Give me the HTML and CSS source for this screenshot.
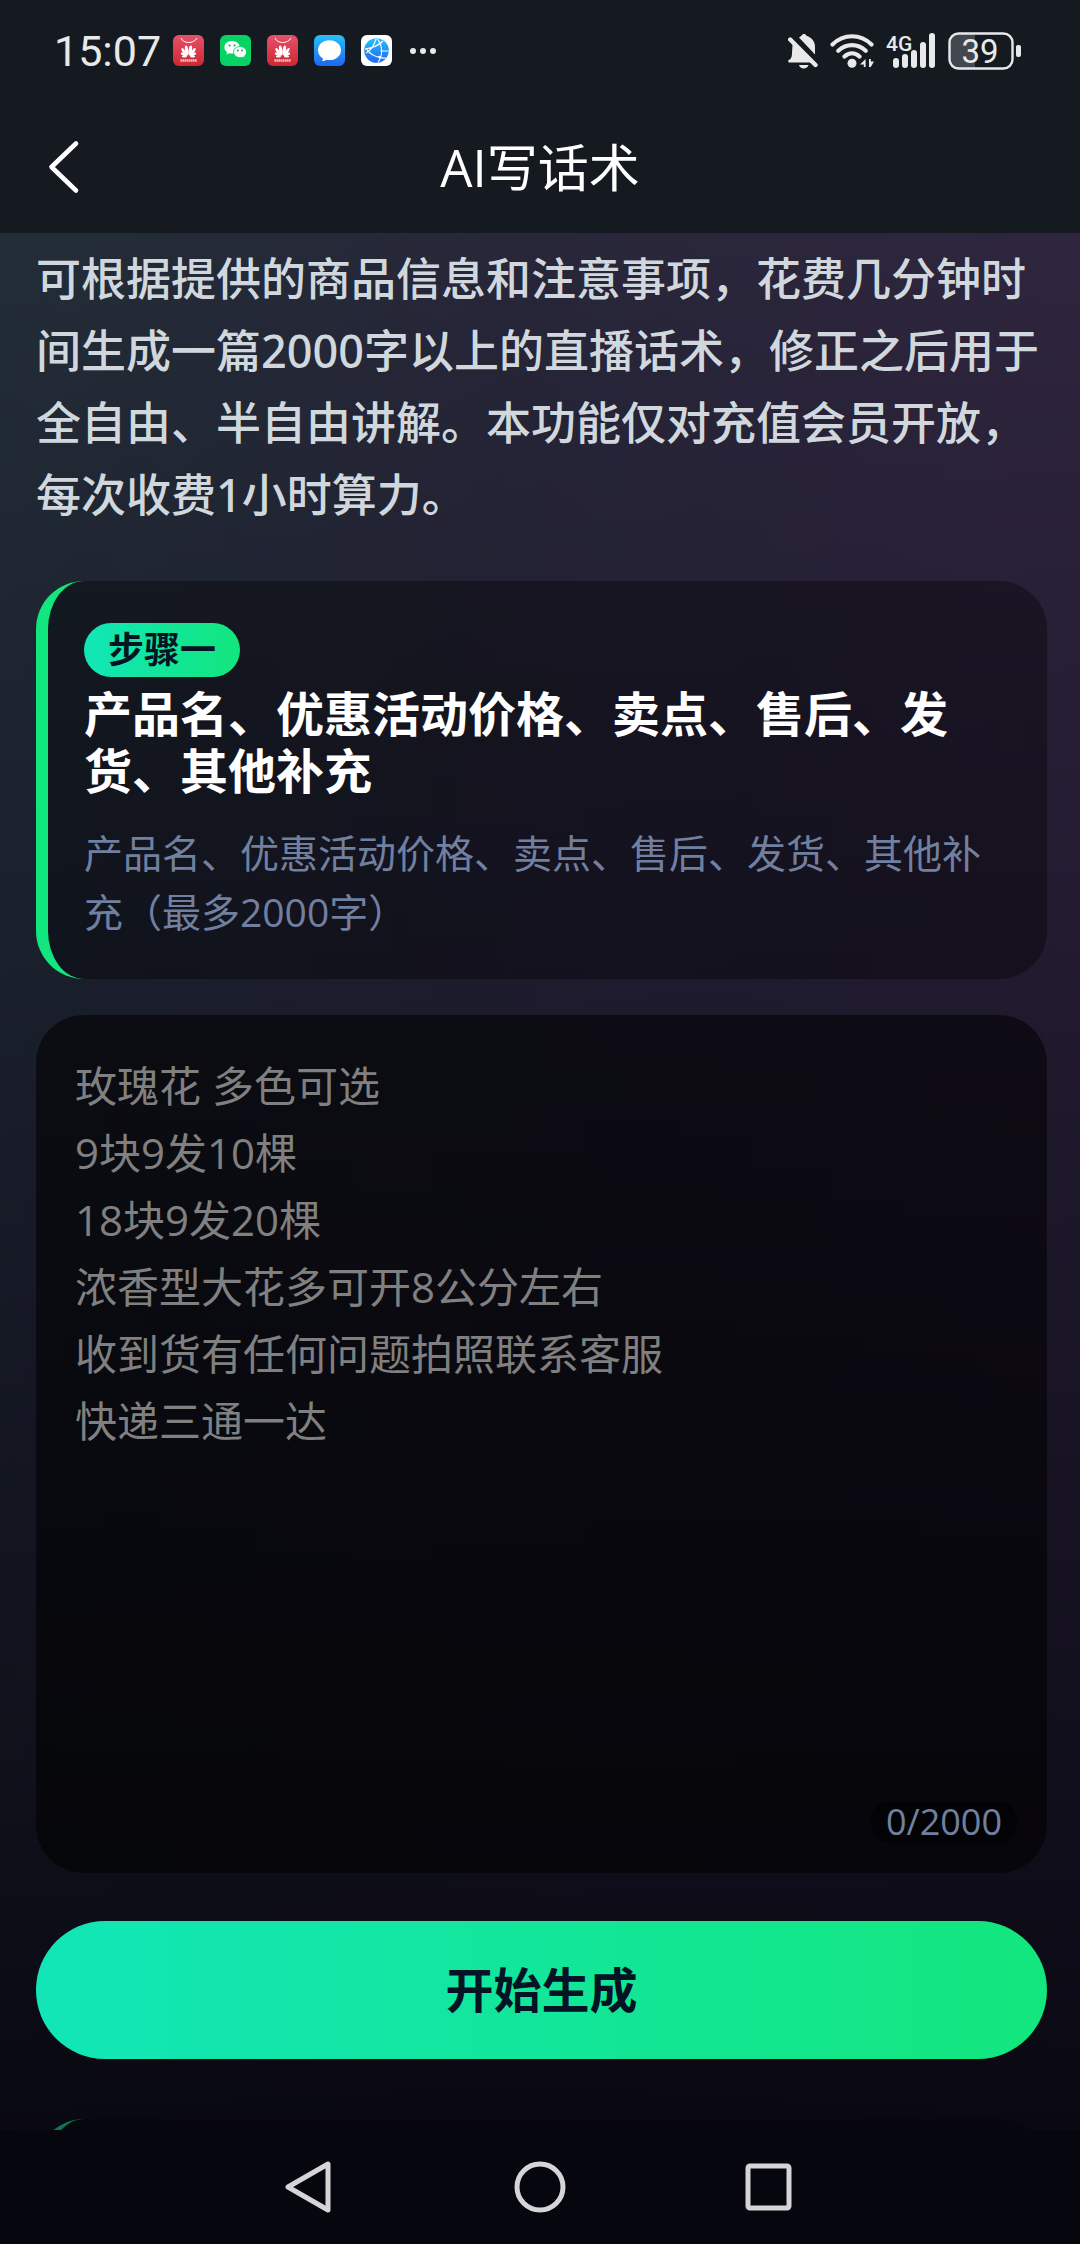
FILE: index.html
```html
<!DOCTYPE html>
<html lang="zh-CN">
<head>
    <meta charset="UTF-8">
    <meta name="viewport" content="width=device-width, initial-scale=1.0">
    <title>AI写话术</title>
    <link rel="stylesheet" href="styles.css">
</head>
<body>
    <header class="top">
        <div class="status-bar">
            <div class="status-left">
                <span class="time">15:07</span>
                <svg class="app-icon" viewBox="0 0 31 31">
                    <defs>
                        <linearGradient id="redBg" x1="0" y1="0" x2="0" y2="1">
                            <stop offset="0" stop-color="#e8506c"/>
                            <stop offset="1" stop-color="#cd2730"/>
                        </linearGradient>
                        <g id="shop">
                            <rect width="31" height="31" rx="6" fill="url(#redBg)"/>
                            <path d="M8 3c2 6 13 6 16 0" fill="none" stroke="#fff" stroke-width="1"/>
                            <g fill="#fff">
                                <ellipse cx="13.7" cy="15.5" rx="1.7" ry="5" transform="rotate(-8 13.7 15.5)"/>
                                <ellipse cx="17.3" cy="15.5" rx="1.7" ry="5" transform="rotate(8 17.3 15.5)"/>
                                <ellipse cx="11.2" cy="17" rx="1.5" ry="4.6" transform="rotate(-32 11.2 17)"/>
                                <ellipse cx="19.8" cy="17" rx="1.5" ry="4.6" transform="rotate(32 19.8 17)"/>
                                <ellipse cx="10.6" cy="19.5" rx="1.2" ry="3.2" transform="rotate(-60 10.6 19.5)"/>
                                <ellipse cx="20.4" cy="19.5" rx="1.2" ry="3.2" transform="rotate(60 20.4 19.5)"/>
                                <ellipse cx="11.4" cy="21.4" rx="2.6" ry="1"/>
                                <ellipse cx="19.6" cy="21.4" rx="2.6" ry="1"/>
                            </g>
                            <path d="M7.5 25.5h16.5" stroke="#fff" stroke-width="2.4" stroke-dasharray="1.3 .7" opacity=".85"/>
                        </g>
                    </defs>
                    <use href="#shop"/>
                </svg>
                <svg class="app-icon" viewBox="0 0 31 31">
                    <rect width="31" height="31" rx="6" fill="#07d364"/>
                    <path d="M12 6c-4.500 0-7.600 2.900-7.600 6.300 0 2 1 3.700 2.700 4.900l-.6 2.300 2.700-1.300c1 .3 2 .4 3 .4 4.400 0 7.600-2.900 7.600-6.300S16.500 6 12 6z" fill="#fff"/>
                    <path d="M20 11.500c-3.800 0-6.400 2.500-6.400 5.500s2.700 5.600 6.400 5.600c.9 0 1.700-.1 2.500-.4l2.300 1.200-.6-2c1.500-1 2.300-2.600 2.300-4.400 0-3-2.700-5.500-6.500-5.500z" fill="#fff" stroke="#07d364" stroke-width=".9"/>
                    <g fill="#07b455">
                        <circle cx="9.600" cy="10.500" r="1.100"/><circle cx="14.500" cy="10.500" r="1.100"/>
                        <circle cx="17.800" cy="15.500" r="1"/><circle cx="22" cy="15.500" r="1"/>
                    </g>
                </svg>
                <svg class="app-icon" viewBox="0 0 31 31"><use href="#shop"/></svg>
                <svg class="app-icon" viewBox="0 0 31 31">
                    <defs>
                        <linearGradient id="blueBg" x1="0" y1="0" x2="0" y2="1">
                            <stop offset="0" stop-color="#27c0fb"/>
                            <stop offset="1" stop-color="#1f67ee"/>
                        </linearGradient>
                    </defs>
                    <rect width="31" height="31" rx="6" fill="url(#blueBg)"/>
                    <path d="M15.500 5.200C9 5.200 4 9.500 4 15.200c0 3.600 1.900 6.600 5 8.300 0 1-.3 1.700-.9 2.500 1.800 0 3.200-.4 4.300-1.200 1 .2 2 .3 3.100.3 6.500 0 11.500-4.300 11.500-9.900S22 5.200 15.500 5.200z" fill="#fff"/>
                </svg>
                <svg class="app-icon" viewBox="0 0 31 31">
                    <rect width="31" height="31" rx="6" fill="#fff"/>
                    <circle cx="15.500" cy="15.500" r="12.300" fill="url(#blueBg)"/>
                    <path d="M16 3.500c6 7 6 17 1 24M4 14c8-1 14-4 18-8M5 13c3 6 12 11 20 10M5 18c4-2 8-7 10-14M19.500 16h8" fill="none" stroke="#fff" stroke-width="1.100"/>
                    <circle cx="19" cy="8.500" r="1.300" fill="#fff"/>
                    <circle cx="18.500" cy="22" r="1.300" fill="#fff"/>
                </svg>
                <svg class="more-icon" viewBox="0 0 28 8" fill="#e8eaea">
                    <circle cx="5" cy="4" r="3"/><circle cx="15" cy="4" r="3"/><circle cx="25" cy="4" r="3"/>
                </svg>
            </div>
            <div class="status-right">
                <svg class="bell-icon" viewBox="0 0 30 36" fill="#e8eaea">
                    <path d="M11 4.500c1-.7 1.800-1.200 2.500-1.700C14 1.600 14.800 1 16 1s2 .6 2.500 1.800c5 1.700 8.500 5.500 8.500 11v7.600z"/>
                    <path d="M4.600 10.500 23 29.500H1.500c-1.700 0-1.700-2.400 0-3H2c1.700-2 2-4 2-6.500z"/>
                    <path d="M2.200 6.500 27.500 32" stroke="#e8eaea" stroke-width="4.400" stroke-linecap="round"/>
                    <path d="M11 32h9.500c-1 4.600-8.500 4.600-9.500 0z"/>
                </svg>
                <svg class="wifi-icon" viewBox="0 0 44 36" fill="none" stroke="#e8eaea" stroke-width="4.200" stroke-linecap="round">
                    <path d="M2.500 11.500c11-11 28-11 39 0M8.300 17.700c8-7.500 19.400-7.500 27.400 0M14.500 23.500c4.500-4.200 10.500-4.200 15 0"/>
                    <circle cx="22" cy="30.300" r="4.500" fill="#e8eaea" stroke="none"/>
                    <path d="M35.600 26v8h-1.800v-2.600h-3.800zM39 26h1.800v2.600h3.200L40.800 34H39z" fill="#e8eaea" stroke="none"/>
                </svg>
                <svg class="signal-icon" viewBox="0 0 50 36" fill="#e8eaea">
                    <text x="0" y="18" class="signal-text">4G</text>
                    <rect x="7" y="25" width="6" height="10" rx="3"/>
                    <rect x="16" y="21" width="6" height="14" rx="3"/>
                    <rect x="25" y="17" width="6" height="18" rx="3"/>
                    <rect x="34" y="9" width="6" height="26" rx="3"/>
                    <rect x="43" y="0" width="6" height="35" rx="3"/>
                </svg>
                <svg class="battery-icon" viewBox="0 0 74 38">
                    <path d="M10 2h17v34H10a8 8 0 0 1-8-8V10a8 8 0 0 1 8-8z" fill="#43474f"/>
                    <rect x="1.500" y="1.500" width="63" height="35" rx="9" fill="none" stroke="#e8eaea" stroke-width="2.400"/>
                    <rect x="68" y="13" width="5" height="12" rx="2" fill="#e8eaea"/>
                    <text x="32" y="31" text-anchor="middle" class="battery-text">39</text>
                </svg>
            </div>
        </div>
        <div class="nav-bar">
            <button type="button" class="back-button" aria-label="返回">
                <svg viewBox="0 0 32 56" fill="none" stroke="#fff" stroke-width="4.600" stroke-linecap="round" stroke-linejoin="round">
                    <path d="M28 4.500 3.500 28 28 51.500"/>
                </svg>
            </button>
            <h1 class="page-title">AI写话术</h1>
        </div>
    </header>

    <main class="content">
        <p class="intro">可根据提供的商品信息和注意事项，花费几分钟时间生成一篇2000字以上的直播话术，修正之后用于全自由、半自由讲解。本功能仅对充值会员开放，每次收费1小时算力。</p>

        <section class="step-card">
            <span class="step-badge">步骤一</span>
            <h2 class="step-title"><label for="productInfo">产品名、优惠活动价格、卖点、售后、发货、其他补充</label></h2>
            <p class="step-desc">产品名、优惠活动价格、卖点、售后、发货、其他补充（最多2000字）</p>
        </section>

        <div class="input-box">
            <textarea id="productInfo" class="input-area" maxlength="2000" placeholder="玫瑰花 多色可选&#10;9块9发10棵&#10;18块9发20棵&#10;浓香型大花多可开8公分左右&#10;收到货有任何问题拍照联系客服&#10;快递三通一达"></textarea>
            <span class="counter">0/2000</span>
        </div>

        <button type="button" class="start-button">开始生成</button>

        <section class="step-card step-disabled"></section>
    </main>

    <nav class="system-nav">
        <button type="button" class="system-button" aria-label="后退">
            <svg viewBox="0 0 56 56"><path d="M46 5v46L6 28z"/></svg>
        </button>
        <button type="button" class="system-button" aria-label="主屏幕">
            <svg viewBox="0 0 56 56"><circle cx="28" cy="28" r="23"/></svg>
        </button>
        <button type="button" class="system-button" aria-label="最近任务">
            <svg viewBox="0 0 56 56"><rect x="6" y="7" width="41" height="42" rx="2"/></svg>
        </button>
    </nav>

    <script>
        // 字数统计
        const input = document.getElementById('productInfo');
        const counter = document.querySelector('.counter');
        input.addEventListener('input', () => {
            counter.textContent = input.value.length + '/2000';
        });
    </script>
</body>
</html>
```
FILE: styles.css
```css
* {
    box-sizing: border-box;
}
body {
    margin: 0;
    height: 100vh;
    display: flex;
    flex-direction: column;
    font-family: "Open Sans", "Noto Sans CJK SC", sans-serif;
    color: #fff;
    background-color: #06060f;
}
h1, h2, p {
    margin: 0;
}
button {
    border: none;
    padding: 0;
    background: none;
    font-family: inherit;
    cursor: pointer;
}
svg {
    display: block;
}

/* 顶部 */
.top {
    flex: none;
    background-color: #141a20;
}
.status-bar {
    display: flex;
    justify-content: space-between;
    align-items: center;
    height: 101px;
    padding: 0 58px 0 54px;
}
.status-left {
    display: flex;
    align-items: center;
    gap: 16px;
}
.time {
    width: 103px;
    font-family: Roboto, sans-serif;
    font-size: 43px;
    line-height: 52px;
    color: #e8eaea;
}
.app-icon {
    width: 31px;
    height: 31px;
}
.more-icon {
    width: 28px;
    height: 8px;
}
.status-right {
    display: flex;
    align-items: center;
    gap: 12px;
}
.bell-icon {
    width: 30px;
    height: 36px;
}
.wifi-icon {
    width: 44px;
    height: 36px;
}
.signal-icon {
    width: 50px;
    height: 36px;
}
.signal-text {
    font-family: Roboto, sans-serif;
    font-size: 21px;
    font-weight: 500;
}
.battery-icon {
    width: 74px;
    height: 38px;
}
.battery-text {
    font-family: Roboto, sans-serif;
    font-size: 33px;
    fill: #e8eaea;
}
.nav-bar {
    display: grid;
    grid-template-columns: 1fr auto 1fr;
    align-items: center;
    height: 132px;
    padding: 0 48px;
}
.back-button {
    width: 32px;
    height: 56px;
}
.page-title {
    font-size: 51px;
    line-height: 68px;
    font-weight: normal;
}

/* 内容 */
.content {
    flex: 1;
    min-height: 0;
    overflow: hidden;
    display: flex;
    flex-direction: column;
    padding: 10px 33px 0 36px;
    background:
        linear-gradient(to bottom, rgba(7, 6, 15, 0), rgba(11, 8, 24, 0.4) 42%, rgba(9, 8, 18, 0.76) 80%, rgba(7, 6, 15, 0.93)),
        linear-gradient(to right, #222d37, #272739 45%, #2f253e);
}
.intro {
    margin-bottom: 50px;
    font-family: "Noto Sans", "Noto Sans CJK SC", sans-serif;
    font-size: 45px;
    line-height: 72px;
    font-weight: 500;
    color: #d0d8de;
}
.step-card {
    flex: none;
    padding: 42px 36px 38px;
    border-left: 12px solid #12e67f;
    border-radius: 48px;
    background-color: rgba(0, 0, 0, 0.35);
}
.step-badge {
    display: block;
    width: fit-content;
    margin-bottom: 8px;
    padding: 0 24px;
    border-radius: 27px;
    background: linear-gradient(to right, #12e6b8, #12e67d);
    font-size: 36px;
    line-height: 54px;
    font-weight: bold;
    color: #041424;
}
.step-title {
    margin-bottom: 24px;
    font-size: 48px;
    line-height: 57px;
    font-weight: bold;
}
.step-desc {
    font-size: 39px;
    line-height: 59px;
    color: #7180a0;
}
.input-box {
    flex: none;
    position: relative;
    margin: 36px 0 48px;
}
.input-area {
    display: block;
    width: 100%;
    height: 858px;
    padding: 37px 39px;
    border: none;
    border-radius: 48px;
    outline: none;
    resize: none;
    background-color: rgba(0, 0, 0, 0.56);
    font-family: inherit;
    font-size: 42px;
    line-height: 67px;
    color: #fff;
}
.input-area::placeholder {
    color: #808080;
}
.counter {
    position: absolute;
    right: 30px;
    bottom: 30px;
    padding: 0 15px;
    border-radius: 20px;
    background-color: rgba(0, 0, 0, 0.5);
    font-size: 36px;
    line-height: 42px;
    color: #7180a0;
}
.start-button {
    flex: none;
    height: 138px;
    margin-bottom: 60px;
    border-radius: 69px;
    background: linear-gradient(to right, #12e6b8, #12e67d);
    font-size: 48px;
    line-height: 72px;
    font-weight: bold;
    color: #041424;
}
.step-disabled {
    min-height: 398px;
    opacity: 0.5;
}

/* 系统导航 */
.system-nav {
    flex: none;
    display: flex;
    justify-content: center;
    height: 114px;
    background-color: #06060f;
}
.system-button {
    display: flex;
    justify-content: center;
    align-items: center;
    width: 230px;
}
.system-button svg {
    width: 56px;
    height: 56px;
    fill: none;
    stroke: #d5d5d7;
    stroke-width: 5;
    stroke-linejoin: round;
}
```
